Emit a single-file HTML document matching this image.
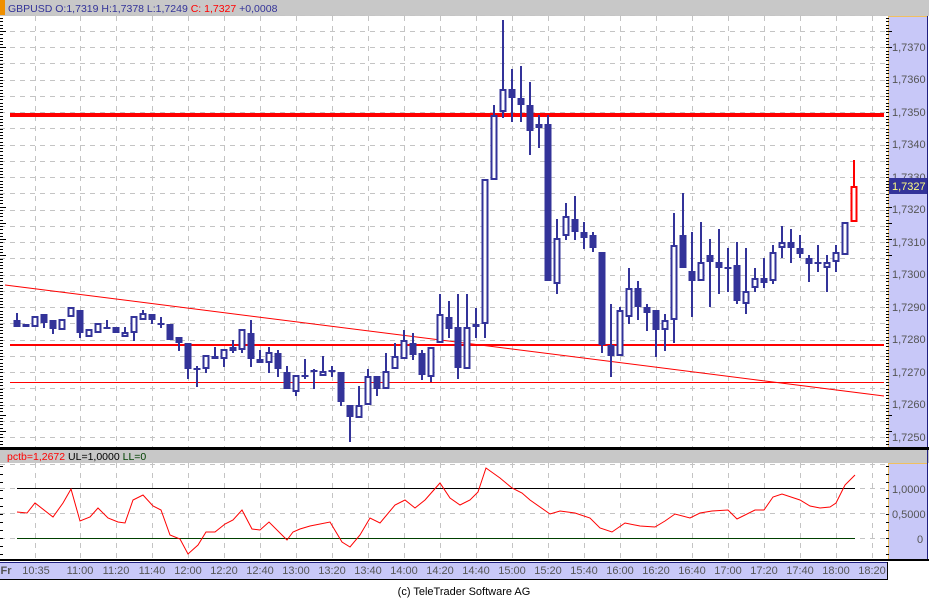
<!DOCTYPE html>
<html><head><meta charset="utf-8"><style>
html,body{margin:0;padding:0;background:#fff;}
svg{display:block;font-family:"Liberation Sans",sans-serif;}
</style></head><body>
<svg id="s" width="929" height="598" viewBox="0 0 929 598" xmlns="http://www.w3.org/2000/svg">
<rect width="929" height="598" fill="#fff"/>
<rect x="0" y="0" width="929" height="16" fill="#c8c8c8"/>
<rect x="0" y="0" width="5" height="16" fill="#f09000"/>
<text x="8" y="12" font-size="10.5" fill="#333399">GBPUSD O:1,7319 H:1,7378 L:1,7249 <tspan fill="#ff0000">C: 1,7327</tspan> +0,0008</text>
<rect x="888" y="16" width="40" height="432" fill="#c8c8f8"/>
<line x1="888" y1="16.5" x2="928" y2="16.5" stroke="#f0c060"/>
<line x1="888.5" y1="16" x2="888.5" y2="448" stroke="#f0c060" stroke-width="1"/>
<line x1="927.5" y1="16" x2="927.5" y2="448" stroke="#202080" stroke-width="1"/>
<g id="grid" stroke="#c4c4c4" stroke-width="1" stroke-dasharray="5,5"></g>
<g font-size="11" fill="#555" id="ylab">
<text x="892" y="51">1,7370</text><text x="892" y="83">1,7360</text><text x="892" y="116">1,7350</text>
<text x="892" y="148">1,7340</text><text x="892" y="181">1,7330</text><text x="892" y="213">1,7320</text>
<text x="892" y="246">1,7310</text><text x="892" y="278">1,7300</text><text x="892" y="311">1,7290</text>
<text x="892" y="343">1,7280</text><text x="892" y="376">1,7270</text><text x="892" y="408">1,7260</text>
<text x="892" y="441">1,7250</text>
</g>
<g id="ticks" stroke="#000" stroke-width="1"></g>
<line x1="10" y1="115" x2="884" y2="115" stroke="#ff0000" stroke-width="4"/>
<line x1="10" y1="345" x2="884" y2="345" stroke="#ff0000" stroke-width="2"/>
<line x1="10" y1="382.5" x2="884" y2="382.5" stroke="#ff0000" stroke-width="1"/>
<line x1="5" y1="285" x2="884" y2="396" stroke="#ff0000" stroke-width="1"/>
<g id="candles"></g>
<rect x="889" y="178" width="38" height="16" fill="#333399"/>
<text x="892" y="190" font-size="11" fill="#ffff80">1,7327</text>
<rect x="0" y="447" width="929" height="3" fill="#000"/>
<rect x="0" y="450" width="929" height="13" fill="#c8c8c8"/>
<text x="7" y="460" font-size="10.5" fill="#ff0000">pctb=1,2672 <tspan fill="#000">UL=1,0000</tspan> <tspan fill="#004000">LL=0</tspan></text>
<rect x="888" y="463" width="40" height="98" fill="#c8c8f8"/>
<line x1="888" y1="463.5" x2="928" y2="463.5" stroke="#f0c060"/>
<line x1="888.5" y1="463" x2="888.5" y2="561" stroke="#f0c060"/>
<line x1="927.5" y1="450" x2="927.5" y2="561" stroke="#202080"/>
<g stroke="#c4c4c4" stroke-dasharray="5,5">
<line x1="0" y1="464.5" x2="887" y2="464.5"/>
<line x1="0" y1="488.5" x2="887" y2="488.5"/>
<line x1="0" y1="513.5" x2="887" y2="513.5"/>
<line x1="0" y1="538.5" x2="887" y2="538.5"/>
</g>
<g id="vgrid2" stroke="#c4c4c4" stroke-dasharray="5,5"></g>
<line x1="17" y1="488.5" x2="855" y2="488.5" stroke="#000"/>
<line x1="17" y1="538.5" x2="855" y2="538.5" stroke="#004000"/>
<polyline fill="none" stroke="#ff0000" stroke-width="1" points="17,512 27,513 35,503 53,517 63,503 71,489 80,521 90,517 98,508 108,518 118,522 125,523 133,500 143,495 153,506 161,510 170,535 180,539 188,554 198,545 206,532 215,532 225,524 233,520 242,510 252,529 260,530 269,522 287,540 293,532 300,529 310,526 330,522 342,542 350,547 360,535 370,518 380,523 395,505 405,500 415,508 425,500 440,483 450,498 460,505 470,500 478,492 486,468 500,478 512,488 522,493 530,500 550,514 560,511 575,513 590,518 600,528 612,532 625,523 640,526 655,527 665,521 675,514 690,518 700,513 712,511 728,510 737,519 755,510 764,510 773,497 782,494 800,500 810,506 820,508 830,507 836,503 845,485 855,475"/>
<g font-size="11" fill="#555">
<text x="892" y="493">1,0000</text><text x="892" y="518">0,5000</text><text x="917" y="543">0</text>
</g>
<g id="ticks2" stroke="#000"></g>
<line x1="0" y1="560" x2="929" y2="560" stroke="#000" stroke-width="2"/>
<rect x="0" y="562" width="888" height="17" fill="#c8c8f8"/>
<line x1="0" y1="562.5" x2="888" y2="562.5" stroke="#202080"/>
<line x1="887.5" y1="562" x2="887.5" y2="580" stroke="#000"/>
<line x1="0" y1="579.5" x2="888" y2="579.5" stroke="#000"/>
<g font-size="11" fill="#555" text-anchor="middle">
<text x="6" y="574" font-weight="bold">Fr</text>
<text x="36" y="574">10:35</text><text x="80" y="574">11:00</text><text x="116" y="574">11:20</text>
<text x="152" y="574">11:40</text><text x="188" y="574">12:00</text><text x="224" y="574">12:20</text>
<text x="260" y="574">12:40</text><text x="296" y="574">13:00</text><text x="332" y="574">13:20</text>
<text x="368" y="574">13:40</text><text x="404" y="574">14:00</text><text x="440" y="574">14:20</text>
<text x="476" y="574">14:40</text><text x="512" y="574">15:00</text><text x="548" y="574">15:20</text>
<text x="584" y="574">15:40</text><text x="620" y="574">16:00</text><text x="656" y="574">16:20</text>
<text x="692" y="574">16:40</text><text x="728" y="574">17:00</text><text x="764" y="574">17:20</text>
<text x="800" y="574">17:40</text><text x="836" y="574">18:00</text><text x="872" y="574">18:20</text>
</g>
<text x="464" y="595" font-size="11" fill="#000" text-anchor="middle">(c) TeleTrader Software AG</text>
</svg>
<script>
var NS="http://www.w3.org/2000/svg";
function el(p,t,a){var e=document.createElementNS(NS,t);for(var k in a)e.setAttribute(k,a[k]);p.appendChild(e);return e;}
var g=document.getElementById('grid');
for(var y=47-16.25*2;y<447;y+=16.25){el(g,'line',{x1:0,y1:Math.round(y)+.5,x2:887,y2:Math.round(y)+.5});}
var vx=[35,80,116,152,188,224,260,296,332,368,404,440,476,512,548,584,620,656,692,728,764,800,836,872];
var g2=document.getElementById('vgrid2');
vx.forEach(function(x){el(g,'line',{x1:x+.5,y1:16,x2:x+.5,y2:447});el(g2,'line',{x1:x+.5,y1:463,x2:x+.5,y2:560});});
var t=document.getElementById('ticks');
for(var y=18;y<447;y+=3.25){var m=Math.round(y);var big=((m-47)%16===0);el(t,'line',{x1:0,y1:m+.5,x2:big?6:3,y2:m+.5});el(t,'line',{x1:886,y1:m+.5,x2:big?892:889,y2:m+.5});}
var t2=document.getElementById('ticks2');
for(var y=466;y<560;y+=8){el(t2,'line',{x1:0,y1:y+.5,x2:3,y2:y+.5});el(t2,'line',{x1:886,y1:y+.5,x2:889,y2:y+.5});}
var D=[[313,327,320,327,1],[324,326,324,327,1],[316,327,316,327,0],[314,328,314,323,1],[320,334,320,329,1],[319,330,319,330,0],[307,317,307,317,0],[310,338,310,333,1],[329,337,329,337,0],[323,333,323,333,0],[320,329,327,329,1],[327,333,327,333,1],[327,337,332,337,0],[316,341,316,333,0],[310,320,313,320,0],[314,324,314,320,1],[317,328,323,325,1],[324,340,324,340,1],[337,351,337,343,1],[343,379,343,369,1],[366,387,368,370,1],[355,373,355,369,0],[347,359,356,359,1],[349,367,349,359,0],[340,353,347,351,0],[329,353,329,350,0],[320,367,333,359,1],[350,363,359,363,1],[347,373,352,363,0],[350,377,353,369,1],[366,389,372,389,1],[375,396,375,392,0],[359,379,375,377,1],[369,389,370,372,1],[356,376,371,376,0],[366,377,370,372,1],[372,406,372,402,1],[405,442,405,417,1],[386,418,405,418,0],[369,405,376,405,0],[376,396,376,389,1],[353,389,371,389,0],[343,369,356,369,0],[330,359,340,359,0],[333,360,343,355,1],[350,380,353,375,1],[347,382,347,377,0],[294,343,314,343,0],[301,338,317,329,1],[294,379,327,368,1],[294,369,327,369,0],[308,338,324,327,0],[179,338,179,324,0],[105,180,115,180,0],[20,118,89,112,0],[69,122,89,98,1],[66,122,98,105,1],[82,155,105,131,1],[115,148,124,128,0],[115,281,124,281,1],[219,294,238,284,0],[203,240,216,236,0],[196,240,219,232,1],[222,249,232,238,1],[232,252,235,248,1],[252,353,252,345,1],[304,377,345,356,1],[307,356,310,356,0],[268,324,288,317,0],[281,320,288,307,1],[304,331,307,313,1],[310,357,310,330,1],[314,351,320,330,0],[213,343,245,320,0],[193,268,235,268,1],[232,317,271,281,1],[222,281,262,281,0],[239,307,255,262,1],[229,294,262,268,1],[248,292,267,269,1],[242,304,265,301,1],[248,314,291,304,0],[268,292,278,288,0],[258,288,278,283,1],[245,284,252,281,0],[226,258,242,248,0],[229,263,242,248,1],[235,258,248,254,1],[255,282,258,264,1],[245,272,262,264,1],[255,292,262,268,0],[245,272,252,262,0],[222,255,222,255,0],[160,222,186,222,0]];
var c=document.getElementById('candles');
D.forEach(function(d,i){var x=17+9*i;var col=(i==93)?'#ff0000':'#333399';
el(c,'rect',{x:x-1,y:d[0],width:2,height:d[1]-d[0],fill:col});
var h=Math.max(2,d[3]-d[2]);
if(d[4]){el(c,'rect',{x:x-3.5,y:d[2],width:7,height:h,fill:col});}
else{el(c,'rect',{x:x-2.5,y:d[2]+1,width:5,height:Math.max(1,h-2),fill:'#fff',stroke:col,'stroke-width':2});}
});
</script>
</body></html>
